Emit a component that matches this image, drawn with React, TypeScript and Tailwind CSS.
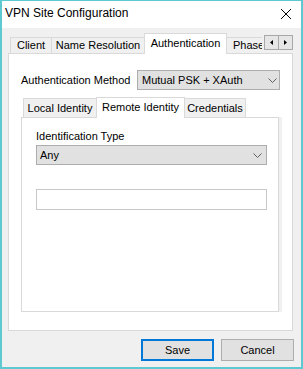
import React from "react";

function Chevron() {
  return (
    <svg width="9" height="5" viewBox="0 0 9 5" className="block">
      <polyline points="0.5,0.5 4.5,4.5 8.5,0.5" fill="none" stroke="#606060" strokeWidth="1" />
    </svg>
  );
}

export default function App() {
  return (
    <div className="w-[303px] h-[369px] border-x-2 border-b-2 border-t border-[#5fc9d1] bg-[#f0f0f0] flex flex-col text-[11px] text-black font-['Liberation_Sans',Arial,sans-serif] overflow-hidden whitespace-nowrap">
      {/* Title bar */}
      <div className="h-[27px] bg-white flex items-start justify-between shrink-0">
        <div className="pl-[3px] pt-[5px] text-[12px] leading-[14px]">VPN Site Configuration</div>
        <svg width="10" height="10" viewBox="0 0 10 10" className="mt-[8px] mr-[10px]">
          <line x1="0" y1="0" x2="10" y2="10" stroke="#000" strokeWidth="1" />
          <line x1="10" y1="0" x2="0" y2="10" stroke="#000" strokeWidth="1" />
        </svg>
      </div>

      {/* Outer tabs */}
      <div className="mt-[5px] h-[20px] flex items-end pl-[8px] relative shrink-0">
        <div className="w-[42px] h-[16px] border-t border-x border-[#d9d9d9] bg-[#f0f0f0] text-center pt-[1px] leading-[13px]">Client</div>
        <div className="-ml-px w-[94px] h-[16px] border-t border-x border-[#d9d9d9] bg-[#f0f0f0] text-center pt-[1px] leading-[13px]">Name Resolution</div>
        <div className="-ml-px w-[83px] h-[21px] -mb-px border-t border-x border-[#d9d9d9] bg-white text-center pt-[3px] leading-[13px] relative z-10">Authentication</div>
        <div className="-ml-px w-[50px] h-[16px] border-t border-x border-[#d9d9d9] bg-[#f0f0f0] pl-[6px] pt-[1px] leading-[13px]">Phase 1</div>
        <div className="absolute left-[260px] top-0 w-[33px] h-[20px] bg-[#f0f0f0] z-20 flex items-start pl-[2px] pt-[2px]">
          <div className="w-[15px] h-[15px] border border-[#a8a8a8] bg-[#e6e6e6] flex items-center justify-center">
            <svg width="3" height="5" viewBox="0 0 3 5"><polygon points="3,0 3,5 0,2.5" fill="#000" /></svg>
          </div>
          <div className="-ml-px w-[15px] h-[15px] border border-[#a8a8a8] bg-[#e6e6e6] flex items-center justify-center">
            <svg width="3" height="5" viewBox="0 0 3 5"><polygon points="0,0 0,5 3,2.5" fill="#000" /></svg>
          </div>
        </div>
      </div>

      {/* Outer panel */}
      <div className="ml-[6px] w-[285px] h-[278px] border border-[#d9d9d9] bg-white shrink-0 flex flex-col">
        <div className="mt-[16px] pl-[12px] flex items-center">
          <div className="w-[116px] leading-[13px]">Authentication Method</div>
          <div className="w-[143px] h-[20px] border border-[#adadad] bg-[#e1e1e1] flex items-center justify-between pl-[4px] pr-[2px]">
            <span className="leading-[13px]">Mutual PSK + XAuth</span>
            <Chevron />
          </div>
        </div>

        {/* Inner tabs */}
        <div className="mt-[7px] ml-[12px] h-[20px] flex items-end pl-[2px]">
          <div className="w-[74px] h-[19px] border-t border-x border-[#d9d9d9] bg-[#f0f0f0] text-center pt-[3px] leading-[13px]">Local Identity</div>
          <div className="-ml-px w-[89px] h-[21px] -mb-px border-t border-x border-[#d9d9d9] bg-white text-center pt-[3px] leading-[13px] relative z-10">Remote Identity</div>
          <div className="-ml-px w-[62px] h-[19px] border-t border-x border-[#d9d9d9] bg-[#f0f0f0] text-center pt-[3px] leading-[13px]">Credentials</div>
        </div>

        <div className="ml-[12px] flex">
          <div className="w-[258px] h-[195px] border border-[#d9d9d9] bg-white flex flex-col pl-[14px]">
            <div className="mt-[12px] h-[13px] leading-[13px]">Identification Type</div>
            <div className="mt-[2px] w-[231px] h-[20px] border border-[#adadad] bg-[#e1e1e1] flex items-center justify-between pl-[3px] pr-[4px]">
              <span className="leading-[13px]">Any</span>
              <Chevron />
            </div>
            <div className="mt-[24px] w-[231px] h-[21px] border border-[#c8c8c8] bg-white" />
          </div>
          <div className="w-[3px] h-[195px] bg-[#f0f0f0]" />
        </div>
      </div>

      {/* Buttons */}
      <div className="mt-[8px] flex justify-end gap-[7px] pr-[7px] shrink-0">
        <div className="w-[73px] h-[22px] border-2 border-[#0078d7] bg-[#e1e1e1] flex items-center justify-center leading-[13px]">Save</div>
        <div className="w-[73px] h-[22px] border border-[#adadad] bg-[#e1e1e1] flex items-center justify-center leading-[13px]">Cancel</div>
      </div>
    </div>
  );
}
